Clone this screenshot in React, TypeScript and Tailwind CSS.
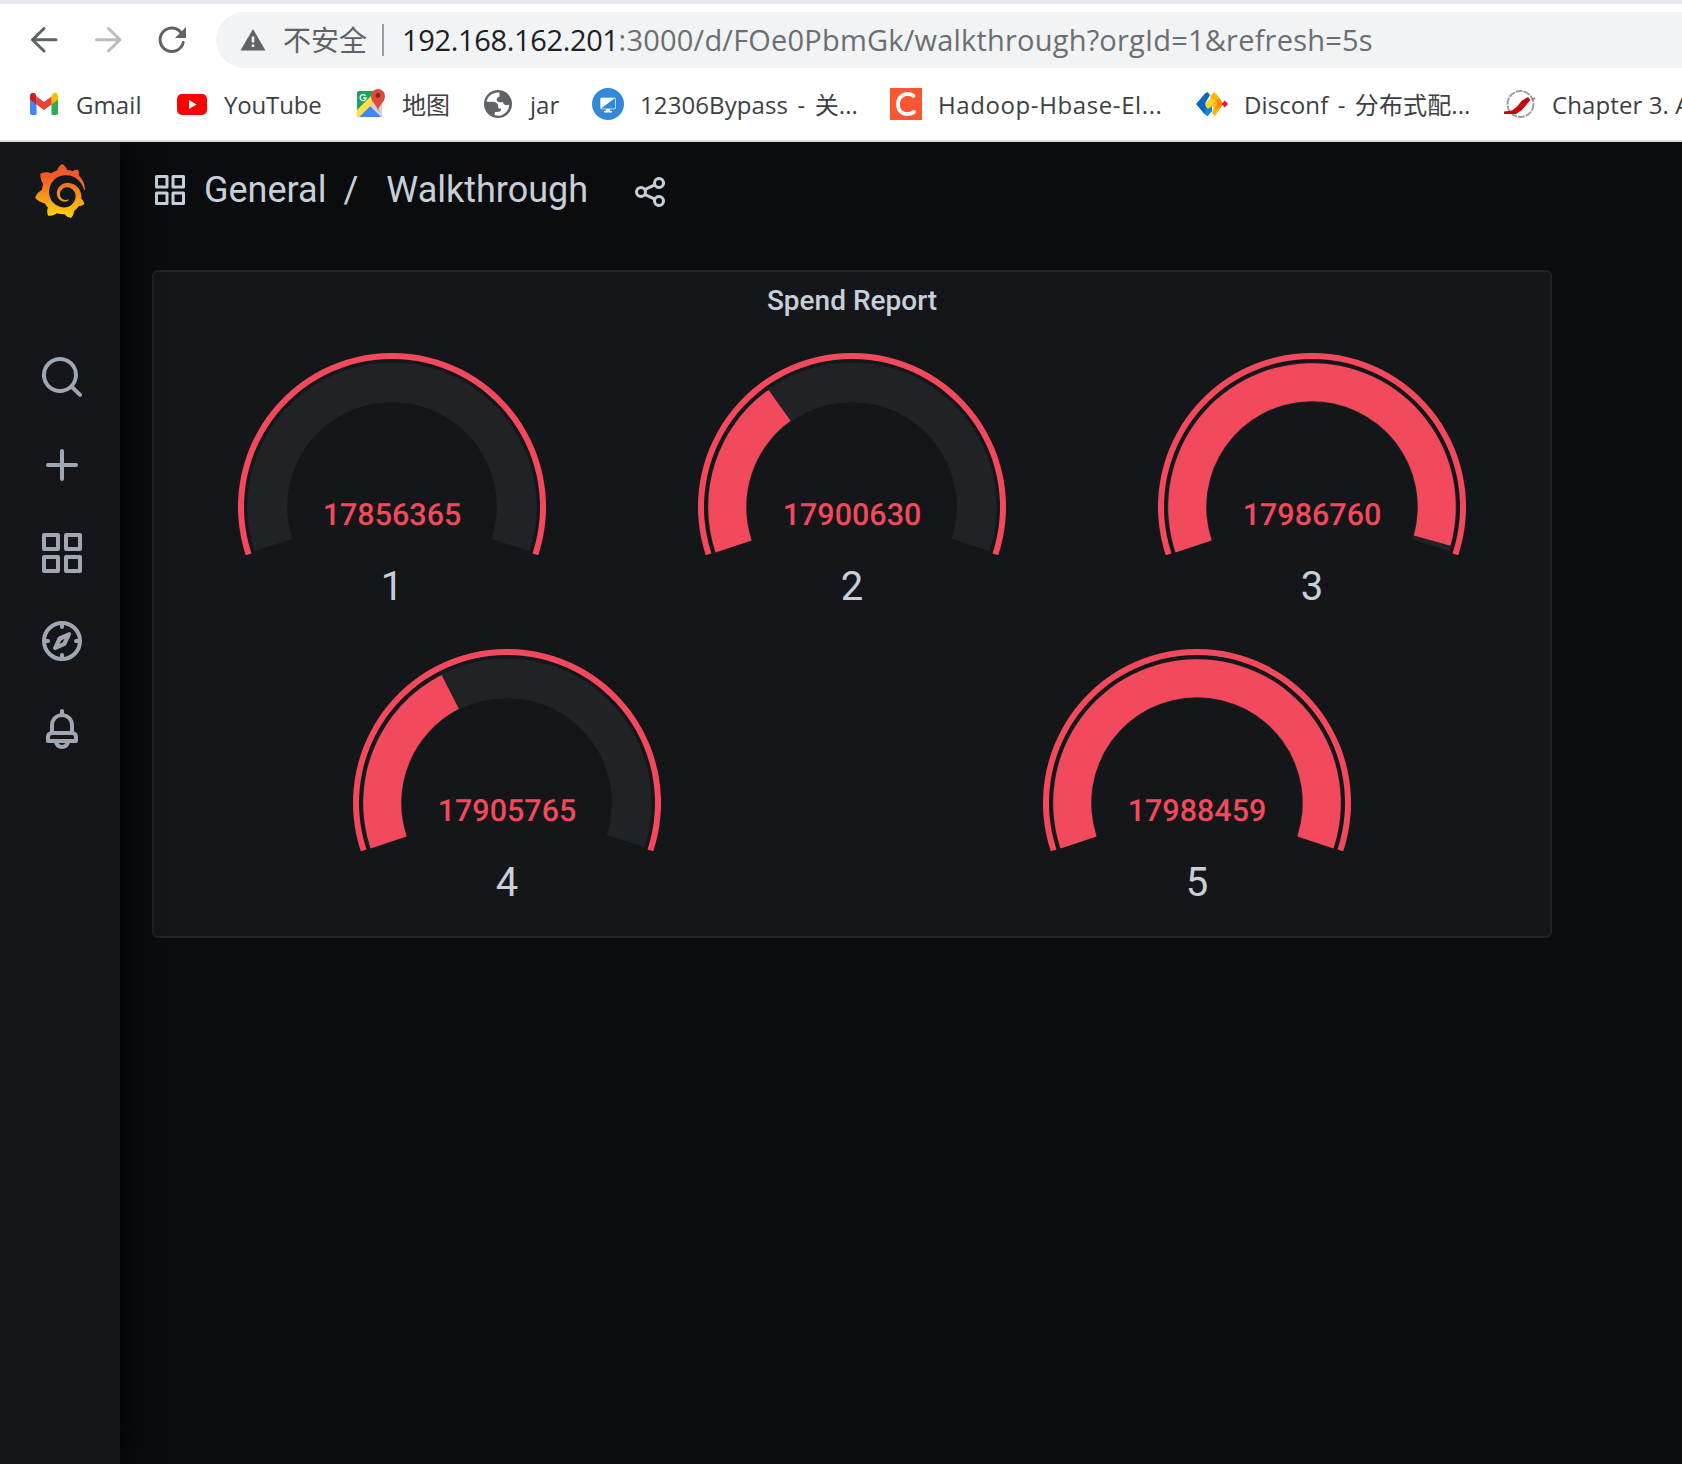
import React from "react";
import { SiGrafana } from "react-icons/si";

const UI_FONT = "font-['Open_Sans','Noto_Sans_CJK_SC',sans-serif]";

const ICONS = {
  search:
    "M21.71,20.29,18,16.61A9,9,0,1,0,16.61,18l3.68,3.68a1,1,0,0,0,1.42,0A1,1,0,0,0,21.71,20.29ZM11,18a7,7,0,1,1,7-7A7,7,0,0,1,11,18Z",
  plus: "M19,11H13V5a1,1,0,0,0-2,0v6H5a1,1,0,0,0,0,2h6v6a1,1,0,0,0,2,0V13h6a1,1,0,0,0,0-2Z",
  apps: "M10,13H3a1,1,0,0,0-1,1v7a1,1,0,0,0,1,1h7a1,1,0,0,0,1-1V14A1,1,0,0,0,10,13ZM9,20H4V15H9ZM21,2H14a1,1,0,0,0-1,1v7a1,1,0,0,0,1,1h7a1,1,0,0,0,1-1V3A1,1,0,0,0,21,2ZM20,9H15V4h5Zm1,4H14a1,1,0,0,0-1,1v7a1,1,0,0,0,1,1h7a1,1,0,0,0,1-1V14A1,1,0,0,0,21,13Zm-1,7H15V15h5ZM10,2H3A1,1,0,0,0,2,3v7a1,1,0,0,0,1,1h7a1,1,0,0,0,1-1V3A1,1,0,0,0,10,2ZM9,9H4V4H9Z",
  bell: "M18,13.18V10a6,6,0,0,0-5-5.91V3a1,1,0,0,0-2,0V4.09A6,6,0,0,0,6,10v3.18A3,3,0,0,0,4,16v2a1,1,0,0,0,1,1H8.14a4,4,0,0,0,7.72,0H19a1,1,0,0,0,1-1V16A3,3,0,0,0,18,13.18ZM8,10a4,4,0,0,1,8,0v3H8Zm4,10a2,2,0,0,1-1.72-1h3.44A2,2,0,0,1,12,20Zm6-3H6V16a1,1,0,0,1,1-1H17a1,1,0,0,1,1,1Z",
  share:
    "M18,14a4,4,0,0,0-3.08,1.48l-5.1-2.35a3.64,3.64,0,0,0,0-2.26l5.1-2.35A4,4,0,1,0,14,6a4.17,4.17,0,0,0,.07.71L8.79,9.14a4,4,0,1,0,0,5.72l5.28,2.43A4.17,4.17,0,0,0,14,18a4,4,0,1,0,4-4ZM18,4a2,2,0,1,1-2,2A2,2,0,0,1,18,4ZM6,14a2,2,0,1,1,2-2A2,2,0,0,1,6,14Zm12,6a2,2,0,1,1,2-2A2,2,0,0,1,18,20Z",
};

function Icon({ name, className }: { name: keyof typeof ICONS; className: string }) {
  return (
    <svg viewBox="0 0 24 24" fill="currentColor" className={className}>
      <path d={ICONS[name]} />
    </svg>
  );
}

function Compass() {
  return (
    <svg viewBox="0 0 24 24" fill="none" stroke="currentColor" strokeWidth="2" className="size-12">
      <circle cx="12" cy="12" r="9" />
      <path d="M12 3v2M12 19v2M3 12h2M19 12h2" strokeLinecap="round" />
      <path
        fill="currentColor"
        stroke="none"
        fillRule="evenodd"
        d="M15.1 7.75 10.4 9.75a1 1 0 0 0-.5.5L7.6 15.2a.95.95 0 0 0 1.25 1.25l4.75-2.1a1 1 0 0 0 .5-.5l2.3-4.9a.9.9 0 0 0-1.3-1.2ZM12.45 12.65l-1.6.8.75-1.75 1.55-.75Z"
      />
    </svg>
  );
}

/* ---------- browser chrome ---------- */

function GmailIcon() {
  return (
    <svg viewBox="0 0 32 32" className="size-8">
      <path d="M2 8v17a2 2 0 0 0 2 2h4.5V13Z" fill="#4285f4" />
      <path d="M30 8v17a2 2 0 0 1-2 2h-4.5V13Z" fill="#34a853" />
      <path d="M23.5 8.500v8L30 11.600V8c0-3-3.200-4-5.200-2.500Z" fill="#fbbc04" />
      <path d="M8.500 16.500v-8L16 14l7.500-5.500v8L16 22Z" fill="#ea4335" />
      <path d="M2 8v3.600l6.500 4.900v-8L7.200 5.500C5.200 4 2 5 2 8Z" fill="#c5221f" />
    </svg>
  );
}

function YouTubeIcon() {
  return (
    <svg viewBox="0 0 32 32" className="size-8">
      <rect x="1" y="6" width="30" height="21" rx="5" fill="#f00" />
      <path d="m13 12 7.500 4.500L13 21Z" fill="#fff" />
    </svg>
  );
}

function MapsIcon() {
  return (
    <svg viewBox="0 0 32 32" className="size-8">
      <rect x="3" y="3" width="25" height="26" rx="2" fill="#1ea362" />
      <path d="M3 27 26 4l2 1v22a2 2 0 0 1-2 2H5Z" fill="#d2d2d2" />
      <path d="m5 29 11-11 11 11Z" fill="#4285f4" />
      <path d="M3 22 18 7l4 5L5 29a2 2 0 0 1-2-2Z" fill="#ffe047" />
      <path d="M24 24c0-7-7-9-7-16a7 7 0 0 1 14 0c0 7-7 9-7 16Z" fill="#dd4b3e" />
      <circle cx="24" cy="7.500" r="2.400" fill="#7b2a22" />
      <path d="M11.500 7.800a3 3 0 1 0 .6 2.200H9.300" fill="none" stroke="#fff" strokeWidth="1.300" />
    </svg>
  );
}

function GlobeIcon() {
  return (
    <svg viewBox="0 0 32 32" className="size-8">
      <circle cx="16" cy="16" r="14" fill="#5f6368" />
      <path
        d="M17.500 4.600C11 3.800 5.800 7.800 4.600 13.800h5c2.500 0 5 .6 6 2.300.8 1.300.5 3 .9 4.400h2.300c.8 1.600-.3 2.800-1.500 3.200l-4.300.4-.6 3c2.400.8 5.200.9 7.200.1 4-1.700 7.400-5.200 7.700-10.400l-2.800.4c-2.200 0-3.200-1.400-3.400-3-2.900 0-6 .1-6.400-2.300-.3-2 1.300-2.700 2.800-3.100Z"
        fill="#fff"
      />
    </svg>
  );
}

function BypassIcon() {
  return (
    <svg viewBox="0 0 32 32" className="size-8">
      <circle cx="16" cy="16" r="16" fill="#3388d8" />
      <rect x="8.500" y="10" width="15" height="11" rx="1" fill="#3388d8" stroke="#bcd9f3" />
      <path d="M9 10h14L9 20.500Z" fill="#fff" />
      <path d="M14 21h4v2h2v1.500h-8V23h2Z" fill="#fff" />
    </svg>
  );
}

function LetterCIcon() {
  return (
    <svg viewBox="0 0 32 32" className="size-8">
      <rect width="32" height="32" fill="#fc5531" />
      <path d="M23.500 7.800C17 3.500 8 7 8 16.500c0 9 8.500 12 16 7.500" fill="none" stroke="#fff" strokeWidth="3.800" strokeLinecap="round" />
    </svg>
  );
}

function DisconfIcon() {
  return (
    <svg viewBox="0 0 16 16" className="size-8">
      <path d="M0 8 4.500 2.800 5.700 2 7 3.500 4.700 7.500 5 9.500 8 8.800V11.500L5.700 14 4 12.800Z" fill="#0b66bf" />
      <path d="M5 9.500 8 8.800V11.500L5.700 14 4.500 13Z" fill="#1287dc" />
      <path d="M7.300 3.800 9 2l1.500 1.400 2 2.600.8 2-1 2-2.800 4L8 12.500 8.800 9.300 7 9Z" fill="#fdb414" />
      <path d="M10 5.500 12.300 5.800 13.300 8l-1 2L9.500 10.500 10.500 8Z" fill="#f98d12" />
      <path d="M5 7.500 7.300 5 9.500 6 8 9 6 10.500 4.800 9Z" fill="#f3d51e" />
      <path d="M14.400 6.200 16 8 14.400 9.800 12.800 8Z" fill="#f5112a" />
    </svg>
  );
}

function ChapterIcon() {
  return (
    <svg viewBox="0 0 32 32" className="size-8">
      <circle cx="16.500" cy="16" r="13" fill="none" stroke="#a0a0a0" strokeWidth="2" strokeDasharray="7 1" />
      <path d="M0 26v-2.500l8-1 5-4 5-6 6-3.500 2.500 3-3.500 4-5 6-6 4Z" fill="#c00a0a" />
      <path d="m28 12 3-2" stroke="#c66" strokeWidth="2" />
    </svg>
  );
}

function Toolbar() {
  return (
    <div className="flex h-16 items-center pl-6">
      <svg viewBox="0 0 40 40" className="size-10" fill="none" stroke="#5f6368" strokeWidth="3" strokeLinecap="round" strokeLinejoin="round">
        <path d="M32 19.700H8.500M20 8.500 8.500 19.700 20 31" />
      </svg>
      <svg viewBox="0 0 40 40" className="ml-6 size-10" fill="none" stroke="#babcbe" strokeWidth="3" strokeLinecap="round" strokeLinejoin="round">
        <path d="M8.500 19.700H32M20.500 8.500 32 19.700 20.500 31" />
      </svg>
      <svg viewBox="0 0 40 40" className="ml-6 size-10" fill="none" stroke="#5f6368" strokeWidth="3">
        <path d="M31.200 22.500a11.700 11.700 0 1 1-2.500-10.300" strokeLinecap="round" />
        <path d="M34 7v11H23Z" fill="#5f6368" stroke="none" />
      </svg>
      <div className="ml-6 flex h-14 flex-1 items-center rounded-l-full bg-[#f1f3f4] pl-6">
        <svg viewBox="0 0 26 22" className="h-[22px] w-[26px]">
          <path d="M13 0 25.500 21.500H.5Z" fill="#5f6368" />
          <path d="M11.700 7.500h2.600v6h-2.600ZM11.700 15.500h2.600v2.600h-2.600Z" fill="#f1f3f4" />
        </svg>
        <span className="ml-[17px] text-[28px] leading-none text-[#5f6368]">不安全</span>
        <div className="ml-[15px] h-8 w-[2px] bg-[#9a9da1]" />
        <span className="mb-[2px] ml-[18px] whitespace-nowrap text-[29px] leading-none tracking-[0.2px] text-[#6b6e72]">
          <span className="tracking-[-0.35px] text-[#202124]">192.168.162.201</span>
          :3000/d/FOe0PbmGk/walkthrough?orgId=1&amp;refresh=5s
        </span>
      </div>
    </div>
  );
}

function Bookmark({ icon, label, className }: { icon: React.ReactNode; label: string; className: string }) {
  return (
    <div className={`flex shrink-0 items-center gap-4 whitespace-nowrap text-[24px] leading-none text-[#3c4043] ${className}`}>
      {icon}
      <span className="mt-[2px]">{label}</span>
    </div>
  );
}

function Bookmarks() {
  return (
    <div className="flex h-[72px] items-center overflow-hidden pl-7">
      <Bookmark icon={<GmailIcon />} label="Gmail" className="w-[148px] tracking-[0.1px]" />
      <Bookmark icon={<YouTubeIcon />} label="YouTube" className="w-[178px] tracking-[-0.15px]" />
      <Bookmark icon={<MapsIcon />} label="地图" className="w-[128px]" />
      <Bookmark icon={<GlobeIcon />} label="jar" className="w-[110px]" />
      <Bookmark icon={<BypassIcon />} label="12306Bypass - 关..." className="w-[298px] tracking-[0.1px] [word-spacing:3px]" />
      <Bookmark icon={<LetterCIcon />} label="Hadoop-Hbase-El..." className="w-[306px] tracking-[0.6px]" />
      <Bookmark icon={<DisconfIcon />} label="Disconf - 分布式配..." className="w-[308px] tracking-[0.1px] [word-spacing:3px]" />
      <Bookmark icon={<ChapterIcon />} label="Chapter 3. A" className="w-[200px] tracking-[0.1px]" />
    </div>
  );
}

/* ---------- dashboard ---------- */

const SERIES = [
  { name: "1", value: 17856365 },
  { name: "2", value: 17900630 },
  { name: "3", value: 17986760 },
  { name: "4", value: 17905765 },
  { name: "5", value: 17988459 },
];
const MIN = Math.min(...SERIES.map((s) => s.value));
const MAX = Math.max(...SERIES.map((s) => s.value));

const CX = 154;
const CY = 154;

/* Ring segment between two angles, in degrees clockwise from the left horizontal. */
function segment(rOuter: number, rInner: number, from: number, to: number) {
  const at = (r: number, deg: number) => {
    const a = ((deg + 180) * Math.PI) / 180;
    return `${(CX + r * Math.cos(a)).toFixed(2)} ${(CY + r * Math.sin(a)).toFixed(2)}`;
  };
  const large = to - from > 180 ? 1 : 0;
  return `M${at(rOuter, from)}A${rOuter} ${rOuter} 0 ${large} 1 ${at(rOuter, to)}L${at(rInner, to)}A${rInner} ${rInner} 0 ${large} 0 ${at(rInner, from)}Z`;
}

function Gauge({ name, value }: { name: string; value: number }) {
  const ratio = (value - MIN) / (MAX - MIN);
  return (
    <div className="flex h-[296px] flex-1 flex-col items-center">
      <svg viewBox="0 0 308 204" className="h-[204px] w-[308px]">
        <path d={segment(154, 148, -18.300, 198.300)} fill="#f2495c" />
        <path d={segment(144.600, 104.800, -17.800, 197.800)} fill="#202226" />
        {ratio > 0 && <path d={segment(143.800, 105.800, -18.400, -18 + ratio * 216.400)} fill="#f2495c" />}
        <text
          x="154"
          y="171.500"
          textAnchor="middle"
          fill="#f2495c"
          textRendering="geometricPrecision"
          className="text-[30.5px] font-medium"
        >
          {value}
        </text>
      </svg>
      <div className="mt-[6px] text-[40px] leading-[48px] text-[#c7d0d9]">{name}</div>
    </div>
  );
}

function Sidebar() {
  return (
    <aside className="z-10 flex w-[120px] shrink-0 flex-col items-center bg-[#141619] pt-[22px] text-[#9fa7b3] shadow-[0_0_40px_#000]">
      <svg width="0" height="0" className="absolute">
        <linearGradient id="flame" x1="0" y1="1" x2="0" y2="0">
          <stop offset="0" stopColor="#fdd40f" />
          <stop offset="0.15" stopColor="#fbc00d" />
          <stop offset="0.75" stopColor="#f15b2a" />
          <stop offset="1" stopColor="#f15b2a" />
        </linearGradient>
      </svg>
      <SiGrafana size={54} fill="url(#flame)" />
      <nav className="mt-[135px] flex flex-col gap-10 pl-1">
        <Icon name="search" className="size-12" />
        <Icon name="plus" className="size-12" />
        <Icon name="apps" className="size-12" />
        <Compass />
        <Icon name="bell" className="size-12" />
      </nav>
    </aside>
  );
}

export default function App() {
  return (
    <div className={`flex h-[1464px] w-[1682px] flex-col overflow-hidden bg-white ${UI_FONT}`}>
      <header className="relative z-20 h-[142px] shrink-0 border-t-4 border-b-2 border-t-[#e8eaed] border-b-[#dadce0] bg-white">
        <div className="pt-1">
          <Toolbar />
        </div>
        <div className="-mt-1">
          <Bookmarks />
        </div>
      </header>
      <div className="flex flex-1 bg-[#0b0c0e] font-['Roboto',sans-serif]">
        <Sidebar />
        <main className="flex-1 pl-8">
          <div className="flex h-24 items-center text-[36px] leading-none text-[#c7d0d9]">
            <Icon name="apps" className="size-9" />
            <span className="ml-4">General</span>
            <span className="ml-[17px]">/</span>
            <span className="ml-[28px]">Walkthrough</span>
            <Icon name="share" className="mt-1 ml-11 size-9" />
          </div>
          <section className="mt-8 h-[668px] w-[1400px] rounded-md border-2 border-[#202226] bg-[#141619] px-2">
            <h2 className="h-[81px] pt-[11px] text-center text-[28px] leading-[36px] font-medium text-[#c7d0d9]">
              Spend Report
            </h2>
            <div className="flex">
              {SERIES.slice(0, 3).map((s) => (
                <Gauge key={s.name} {...s} />
              ))}
            </div>
            <div className="flex">
              {SERIES.slice(3).map((s) => (
                <Gauge key={s.name} {...s} />
              ))}
            </div>
          </section>
        </main>
      </div>
    </div>
  );
}
